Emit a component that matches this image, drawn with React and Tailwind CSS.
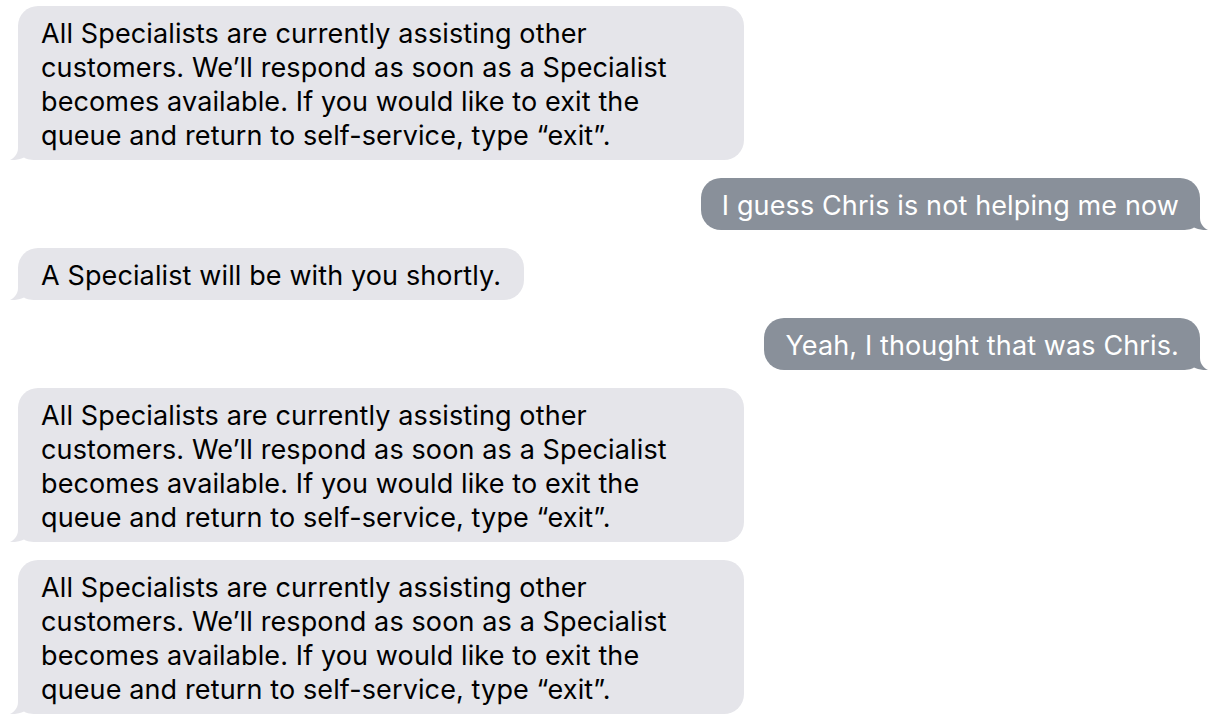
const font = { fontFamily: 'Inter, "Noto Sans", sans-serif' };

const longText = [
  'All Specialists are currently assisting other',
  'customers. We\u2019ll respond as soon as a Specialist',
  'becomes available. If you would like to exit the',
  'queue and return to self-service, type \u201Cexit\u201D.',
];

function Tail({ side, color }) {
  const pos = side === 'left' ? 'left-[-9px]' : 'right-[-9px] -scale-x-100';
  return (
    <svg className={`absolute bottom-0 ${pos}`} width="30" height="24" viewBox="0 0 30 24">
      <path
        d="M9 0 L9 12 C9 18 5 22 1 24 C7 24.5 12 23 15 21.5 C18 23.5 22 24 30 24 L30 0 Z"
        fill={color}
      />
    </svg>
  );
}

function Received({ lines, wide }) {
  return (
    <div
      className={`relative ml-[18px] rounded-[20px] bg-[#e5e5ea] px-[23px] pt-[11px] pb-[7px] text-[27px] leading-[34px] tracking-[0.12px] text-black ${wide ? 'w-[726px]' : 'w-fit whitespace-nowrap'}`}
    >
      <Tail side="left" color="#e5e5ea" />
      <div className="relative">
        {lines.map((l, i) => (
          <div key={i}>{l}</div>
        ))}
      </div>
    </div>
  );
}

function Sent({ text }) {
  return (
    <div className="relative mr-[24px] self-end whitespace-nowrap rounded-[20px] bg-[#89909a] px-[21px] pt-[11px] pb-[7px] text-[27px] leading-[34px] tracking-[0.12px] text-white">
      <Tail side="right" color="#89909a" />
      <div className="relative">{text}</div>
    </div>
  );
}

export default function App() {
  return (
    <div className="flex h-[726px] w-[1224px] flex-col items-start gap-[18px] overflow-hidden bg-white pt-[6px] antialiased" style={font}>
      <Received lines={longText} wide />
      <Sent text="I guess Chris is not helping me now" />
      <Received lines={['A Specialist will be with you shortly.']} />
      <Sent text="Yeah, I thought that was Chris." />
      <Received lines={longText} wide />
      <Received lines={longText} wide />
    </div>
  );
}
